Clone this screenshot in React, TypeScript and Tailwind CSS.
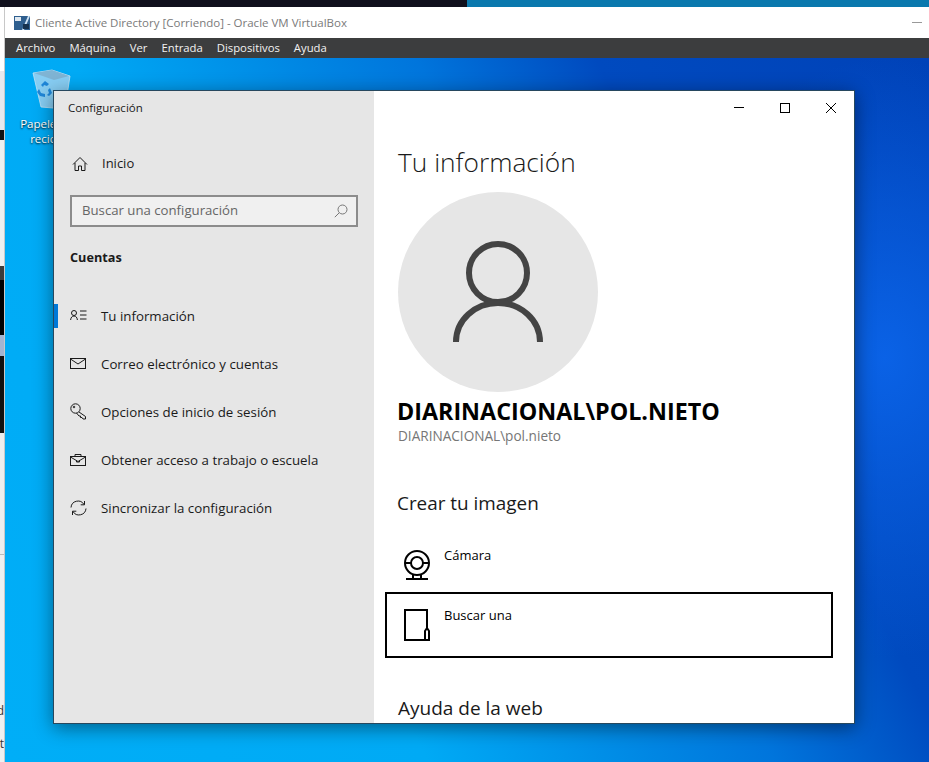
import React from 'react';

const font = { fontFamily: '"Open Sans", "Noto Sans", sans-serif' };

const menus = ['Archivo', 'Máquina', 'Ver', 'Entrada', 'Dispositivos', 'Ayuda'];

const HomeIcon = () => (
  <svg width="16" height="16" viewBox="0 0 16 16" fill="none" stroke="#1a1a1a" strokeWidth="1">
    <path d="M1 8.500 8 1.500l7 7M3 7v7.500h3.500V10h3v4.500H13V7" />
  </svg>
);

const InfoIcon = () => (
  <svg width="17" height="11" viewBox="0 0 17 11" fill="none" stroke="#1a1a1a" strokeWidth="1">
    <circle cx="4" cy="3" r="2.500" />
    <path d="M.6 10c.3-2.600 1.500-4 3.400-4s3.100 1.400 3.400 4M10 1h6.500M10 5h6.500M10 9h6.500" />
  </svg>
);

const MailIcon = () => (
  <svg width="16" height="11" viewBox="0 0 16 11" fill="none" stroke="#1a1a1a" strokeWidth="1">
    <rect x=".5" y=".5" width="15" height="10" />
    <path d="M.5 1 8 6l7.500-5" />
  </svg>
);

const KeyIcon = () => (
  <svg width="17" height="17" viewBox="0 0 17 17" fill="none" stroke="#1a1a1a" strokeWidth="1">
    <circle cx="5.500" cy="5.500" r="4.700" />
    <circle cx="4" cy="4" r=".8" />
    <path d="M9 9l6.500 4.500v2.500h-2.500l-1-1.500h-1.500v-1.500h-1.500l-2.500-3" />
  </svg>
);

const BriefcaseIcon = () => (
  <svg width="16" height="12" viewBox="0 0 16 12" fill="none" stroke="#1a1a1a" strokeWidth="1">
    <rect x=".5" y="2.500" width="15" height="9" />
    <path d="M5 2.500V.5h6v2M.5 3 8 7.500 15.500 3M6.500 6.500v1.500h3V6.500" />
  </svg>
);

const SyncIcon = () => (
  <svg width="17" height="16" viewBox="0 0 17 16" fill="none" stroke="#1a1a1a" strokeWidth="1">
    <path d="M1 7.500A7 7 0 0 1 14 4.500M14.500 1v3.800h-3.800M16 8.500A7 7 0 0 1 3 11.500M2.500 15v-3.800h3.800" />
  </svg>
);

const nav = [
  { label: 'Tu información', icon: <InfoIcon />, active: true },
  { label: 'Correo electrónico y cuentas', icon: <MailIcon /> },
  { label: 'Opciones de inicio de sesión', icon: <KeyIcon /> },
  { label: 'Obtener acceso a trabajo o escuela', icon: <BriefcaseIcon /> },
  { label: 'Sincronizar la configuración', icon: <SyncIcon /> },
];

const RecycleBin = () => (
  <svg width="40" height="50" viewBox="0 0 40 50">
    <path d="M1 7 20 4l18 6-5 33-24-2z" fill="#9fd4f2" fillOpacity=".85" stroke="#c4e2f4" strokeWidth=".8" />
    <path d="M2 7l18-3 17 6-15 4z" fill="#7fb4d4" />
    <path d="M9 19l4-4 4 3-2 2-3-1-1 2zM18 22l2 5-3 3-2-1 2-2-1-3zM7 23l2 4 4 1v3l-5-1-3-4z" fill="#1f86d8" />
  </svg>
);

const VboxIcon = () => (
  <svg width="16" height="16" viewBox="0 0 16 16">
    <rect x="0" y="1" width="16" height="14" fill="#2f5f8f" />
    <rect x="1" y="2" width="6" height="4" fill="#dfe8f0" />
    <path d="M8 15 14 1h2L10 15z" fill="#cfe3f4" />
    <rect x="9" y="9" width="6" height="5" fill="#16324f" />
  </svg>
);

const App: React.FC = () => {
  return (
    <div className="w-[929px] h-[762px] overflow-hidden flex flex-col bg-[#f0f0f0]" style={font}>
      {/* Host desktop behind the VM window */}
      <div className="h-[7px] flex shrink-0">
        <div className="w-[467px] bg-[#0f0f1c]" />
        <div className="flex-1 bg-[#0a78ad]" />
      </div>

      <div className="flex-1 flex min-h-0">
        <div className="w-[5px] shrink-0 flex flex-col overflow-hidden text-[12px] leading-none border-r border-[#c8c8c8]">
          <div className="h-[64px] bg-white shrink-0" />
          <div className="h-[59px] bg-[#e8e8ee] shrink-0" />
          <div className="h-[10px] bg-[#111111] shrink-0" />
          <div className="h-[126px] bg-[#f0f0f0] shrink-0" />
          <div className="h-[14px] bg-[#3c3c3c] shrink-0" />
          <div className="h-[55px] bg-black shrink-0" />
          <div className="h-[21px] bg-[#a3b4d0] shrink-0" />
          <div className="h-[77px] bg-[#111111] shrink-0" />
          <div className="h-[122px] bg-[#eeeeee] border-b border-[#bbbbbb] shrink-0" />
          <div className="flex-1 bg-[#f0f0f0] pt-[150px] flex flex-col items-end text-[#333333]">
            <span>d</span>
            <span className="mt-[21px]">t</span>
          </div>
        </div>

        <div className="flex-1 flex flex-col min-w-0">
          {/* VirtualBox title bar */}
          <div className="h-[31px] shrink-0 bg-white flex items-center pl-[9px] pr-[7px]">
            <VboxIcon />
            <span className="ml-[5px] text-[11.5px] text-[#7a7a7a]">
              Cliente Active Directory [Corriendo] - Oracle VM VirtualBox
            </span>
            <div className="ml-auto w-[10px] h-px bg-[#999999]" />
          </div>

          {/* VirtualBox menu bar */}
          <div className="h-[20px] shrink-0 bg-[#3c3d3e] flex items-center pl-[11px] gap-[14px] text-[11.300px] text-[#f2f2f2]">
            {menus.map((m) => (
              <span key={m}>{m}</span>
            ))}
          </div>

          {/* Guest desktop */}
          <div className="relative flex-1 bg-[radial-gradient(ellipse_220px_300px_at_880px_300px,#0a62e6_0%,transparent_100%),linear-gradient(63deg,#00aef7_0%,#00aaf5_33%,#0088e4_50%,#0075dc_60%,#004abf_74%,#0042b8_100%)]">
            <div className="absolute left-[17px] top-[8px] w-[60px] flex flex-col items-center">
              <RecycleBin />
              <div className="text-[11.5px] leading-[15px] text-white text-center [text-shadow:0_1px_2px_#000] whitespace-nowrap">
                Papelera de
                <br />
                reciclaje
              </div>
            </div>

            {/* Settings window */}
            <div className="absolute left-[48px] top-[32px] w-[802px] h-[634px] flex overflow-hidden border border-[#27485e] bg-white shadow-[0_4px_18px_rgba(0,0,0,0.45)]">
              <aside className="w-[320px] shrink-0 bg-[#e6e6e6] flex flex-col text-[#1a1a1a]">
                <div className="pl-[14px] pt-[9px] text-[11.5px] leading-[16px]">Configuración</div>

                <div className="mt-[36px] pl-[18px] flex items-center h-[24px]">
                  <HomeIcon />
                  <span className="ml-[14px] text-[13px]">Inicio</span>
                </div>

                <div className="mt-[19px] ml-[16px] w-[288px] h-[32px] shrink-0 border-2 border-[#8c8c8c] bg-[#f0f0f0] flex items-center pl-[10px] pr-[8px] text-[13.2px] text-[#666666]">
                  <span>Buscar una configuración</span>
                  <svg className="ml-auto" width="14" height="14" viewBox="0 0 14 14" fill="none" stroke="#777777" strokeWidth="1">
                    <circle cx="8.500" cy="5.500" r="4.500" />
                    <path d="M5.200 8.800.8 13.200" />
                  </svg>
                </div>

                <div className="mt-[20px] pl-[16px] text-[12.7px] font-bold leading-[20px]">Cuentas</div>

                <nav className="mt-[26px] flex flex-col">
                  {nav.map((item) => (
                    <div key={item.label} className="relative h-[48px] flex items-center text-[13.3px]">
                      {item.active && <div className="absolute left-0 top-[11px] h-[24px] w-[4px] bg-[#0078d7]" />}
                      <div className="w-[47px] pl-[16px] -mt-[3px] flex items-center justify-start shrink-0">{item.icon}</div>
                      <span>{item.label}</span>
                    </div>
                  ))}
                </nav>
              </aside>

              <main className="flex-1 relative text-black">
                {/* Window controls */}
                <div className="absolute right-0 top-0 flex items-center h-[33px]">
                  <div className="w-[46px] flex justify-center">
                    <div className="w-[10px] h-px bg-black" />
                  </div>
                  <div className="w-[46px] flex justify-center">
                    <div className="w-[10px] h-[10px] border border-black" />
                  </div>
                  <div className="w-[46px] flex justify-center">
                    <svg width="10" height="10" viewBox="0 0 10 10" stroke="#000" strokeWidth="1">
                      <path d="M0 0l10 10M10 0 0 10" />
                    </svg>
                  </div>
                </div>

                <div className="pl-[24px] pt-[52px]">
                  <h1 className="text-[26.3px] font-light leading-[38px] text-[#1a1a1a]">Tu información</h1>

                  <div className="mt-[11px] w-[200px] h-[200px] rounded-full bg-[#e6e6e6] flex items-center justify-center">
                    <svg width="90" height="102" viewBox="0 0 90 102" fill="none" stroke="#444444" strokeWidth="6">
                      <circle cx="45" cy="32" r="29" />
                      <path d="M3 101C3 79 22 62 45 62s42 17 42 39" />
                    </svg>
                  </div>

                  <div className="mt-[6px] -ml-[1px] text-[23.3px] font-bold leading-[26px] whitespace-nowrap">DIARINACIONAL\POL.NIETO</div>
                  <div className="mt-[3px] text-[13.6px] leading-[18px] text-[#767676]">DIARINACIONAL\pol.nieto</div>

                  <h2 className="mt-[45px] -ml-[1px] text-[18.900px] leading-[26px] text-[#1a1a1a]">Crear tu imagen</h2>
                </div>

                <div className="mt-[33px] pl-[29px] h-[43px] flex items-start">
                  <svg className="mt-[1px]" width="28" height="30" viewBox="0 0 28 30" fill="none" stroke="#000" strokeWidth="2">
                    <circle cx="14" cy="13" r="12" />
                    <circle cx="14" cy="13" r="6" />
                    <path d="M2 13h6M20 13h6M10 25v4M18 25v4M3 29h22" />
                  </svg>
                  <span className="ml-[13px] -mt-[3px] text-[13px] leading-[18px]">Cámara</span>
                </div>

                <div className="ml-[11px] w-[448px] h-[66px] border-2 border-black pl-[17px] pt-[15px] flex items-start">
                  <svg width="27" height="33" viewBox="0 0 27 33" fill="none" stroke="#000" strokeWidth="2">
                    <path d="M21 31H1V1h22v19" />
                    <path d="M21 31v-9l2-3 2 3v9z" />
                  </svg>
                  <span className="ml-[13px] -mt-[3px] text-[13px] leading-[18px]">Buscar una</span>
                </div>

                <h2 className="mt-[37px] ml-[24px] text-[19px] leading-[26px] text-[#1a1a1a]">Ayuda de la web</h2>
              </main>
            </div>
          </div>
        </div>
      </div>
    </div>
  );
};

export default App;
